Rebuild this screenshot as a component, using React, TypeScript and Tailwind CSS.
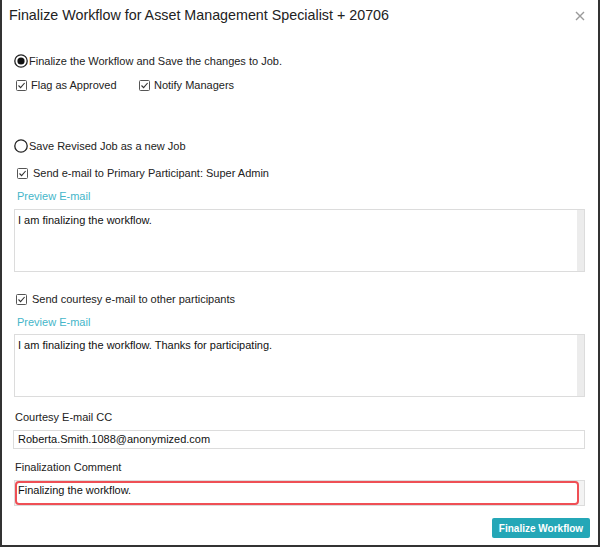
const font = { fontFamily: '"Liberation Sans", Arial, sans-serif' }

function Radio({ checked }: { checked?: boolean }) {
  return (
    <svg width="14" height="14" viewBox="0 0 14 14" className="shrink-0">
      <circle cx="7" cy="7" r="6.2" fill="white" stroke="#222" strokeWidth="1.3" />
      {checked && <circle cx="7" cy="7" r="3.6" fill="#111" />}
    </svg>
  )
}

function Check() {
  return (
    <svg width="11" height="11" viewBox="0 0 11 11" className="shrink-0">
      <rect x="0.5" y="0.5" width="10" height="10" rx="1" fill="white" stroke="#555" />
      <path d="M2.5 5.5 L4.6 7.6 L8.6 3" fill="none" stroke="#333" strokeWidth="1.1" />
    </svg>
  )
}

function Box({ text, h }: { text: string; h: string }) {
  return (
    <div className={`ml-[12px] w-[571px] ${h} flex border border-[#dcdcdc] bg-white`}>
      <div className="flex-1 px-[3px] pt-[2px] text-[11px] text-[#111]">{text}</div>
      <div className="w-[7px] bg-[#ececec]" />
    </div>
  )
}

export default function App() {
  return (
    <div className="h-[547px] w-[600px] border-x-2 border-b-2 border-[#333] bg-white text-[#222]" style={font}>
      <div className="flex h-[32px] items-center justify-between pl-[7px] pr-[13px]">
        <span className="text-[14.3px] text-[#222]">Finalize Workflow for Asset Management Specialist + 20706</span>
        <svg width="10" height="10" viewBox="0 0 10 10">
          <path d="M1 1 L9 9 M9 1 L1 9" stroke="#9a9a9a" strokeWidth="1.4" />
        </svg>
      </div>

      <div className="ml-[12px] mt-[21px] flex h-[16px] items-center gap-[1px] text-[11px]">
        <Radio checked />
        <span>Finalize the Workflow and Save the changes to Job.</span>
      </div>
      <div className="ml-[14px] mt-[8px] flex h-[16px] items-center text-[11px]">
        <Check />
        <span className="ml-[4px] w-[108px]">Flag as Approved</span>
        <Check />
        <span className="ml-[4px]">Notify Managers</span>
      </div>

      <div className="ml-[12px] mt-[45px] flex h-[16px] items-center gap-[1px] text-[11px]">
        <Radio />
        <span>Save Revised Job as a new Job</span>
      </div>
      <div className="ml-[15px] mt-[11px] flex h-[16px] items-center gap-[5px] text-[11px]">
        <Check />
        <span>Send e-mail to Primary Participant: Super Admin</span>
      </div>
      <div className="ml-[15px] mt-[7px] h-[16px] text-[11px] leading-[16px] text-[#45b6c9]">Preview E-mail</div>
      <div className="mt-[5px]">
        <Box text="I am finalizing the workflow." h="h-[63px]" />
      </div>

      <div className="ml-[14px] mt-[19px] flex h-[16px] items-center gap-[5px] text-[11px]">
        <Check />
        <span>Send courtesy e-mail to other participants</span>
      </div>
      <div className="ml-[15px] mt-[7px] h-[16px] text-[11px] leading-[16px] text-[#45b6c9]">Preview E-mail</div>
      <div className="mt-[4px]">
        <Box text="I am finalizing the workflow. Thanks for participating." h="h-[63px]" />
      </div>

      <div className="ml-[13px] mt-[12px] h-[16px] text-[11px] leading-[16px]">Courtesy E-mail CC</div>
      <div className="ml-[11px] mt-[5px] flex h-[19px] w-[572px] items-center border border-[#dcdcdc] px-[4px] text-[11px] text-[#111]">
        Roberta.Smith.1088@anonymized.com
      </div>

      <div className="ml-[13px] mt-[10px] h-[16px] text-[11px] leading-[16px]">Finalization Comment</div>
      <div className="ml-[12px] mt-[5px] flex h-[26px] w-[571px] border border-[#dcdcdc] bg-[#f3f3f3]">
        <div className="flex-1 rounded-[4px] border-2 border-[#ef4f55] bg-white px-[1px] text-[11px] leading-[14px] text-[#111]">
          Finalizing the workflow.
        </div>
        <div className="w-[5px]" />
      </div>

      <div className="mt-[12px] flex justify-end pr-[8px]">
        <button className="h-[20px] w-[98px] rounded-[2px] bg-[#24a7b7] text-[10px] font-bold text-white" style={font}>
          Finalize Workflow
        </button>
      </div>
    </div>
  )
}
